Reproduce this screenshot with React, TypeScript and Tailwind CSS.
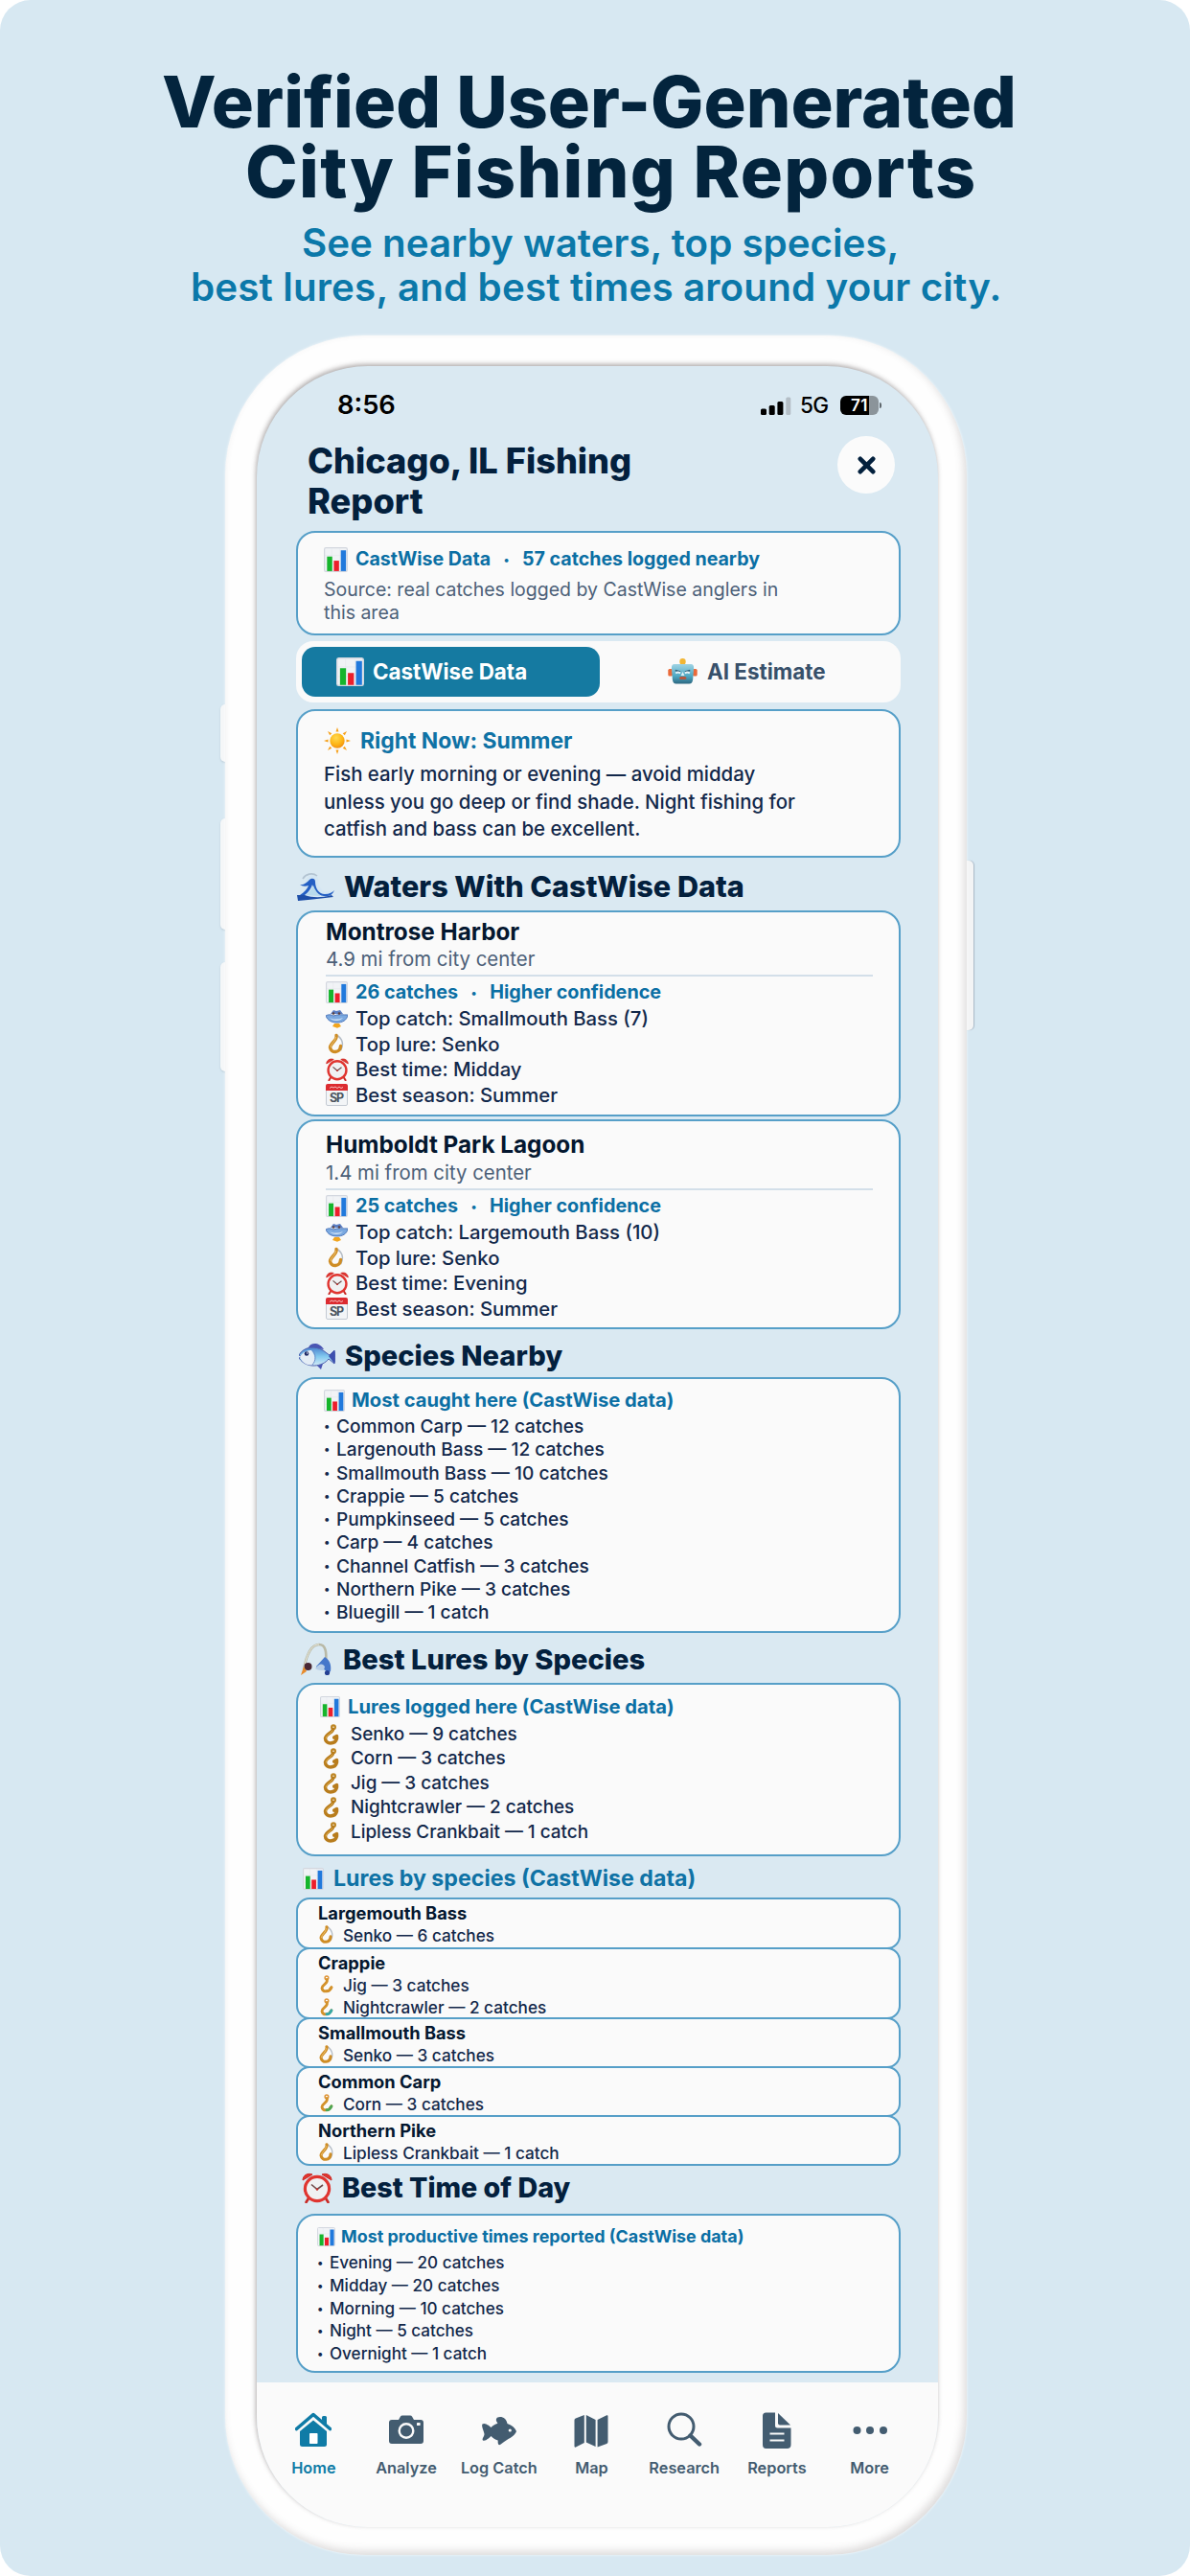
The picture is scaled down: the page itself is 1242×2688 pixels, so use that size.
import type { ReactNode } from "react";

type IconProps = { className?: string };

const ChartIcon = ({ className }: IconProps) => (
  <svg viewBox="0 0 24 24" preserveAspectRatio="none" className={className}>
    <rect x="0.6" y="0.6" width="22.8" height="22.8" rx="1.4" fill="#f1f3f6" stroke="#d3d7df" strokeWidth="1.2" />
    <path d="M1 8h22M1 16h22M8 1v22M16 1v22" stroke="#e3e6ec" strokeWidth="0.5" />
    <rect x="3.2" y="9" width="5.2" height="14" fill="#16b52c" />
    <rect x="10" y="13" width="5.2" height="10" fill="#ec1f2b" />
    <rect x="17" y="3" width="5.2" height="20" fill="#2179dc" />
  </svg>
);

const SunIcon = ({ className }: IconProps) => (
  <svg viewBox="0 0 28 28" className={className}>
    <defs>
      <radialGradient id="sun" cx="0.42" cy="0.3" r="0.75">
        <stop offset="0" stopColor="#ffd94f" />
        <stop offset="0.6" stopColor="#fdb515" />
        <stop offset="1" stopColor="#f08a12" />
      </radialGradient>
    </defs>
    <path
      d="M14 0l1.5 4.5h-3zM14 28l1.5-4.5h-3zM0 14l4.5-1.5v3zM28 14l-4.5-1.5v3zM4 4l4.3 2.2-2.1 2.1zM24 4l-4.3 2.2 2.1 2.1zM4 24l4.3-2.2-2.1-2.1zM24 24l-4.3-2.2 2.1-2.1z"
      fill="#f6a019"
    />
    <circle cx="14" cy="14" r="7.7" fill="url(#sun)" />
  </svg>
);

const RobotIcon = ({ className }: IconProps) => (
  <svg viewBox="0 0 32 27" preserveAspectRatio="none" className={className}>
    <defs>
      <linearGradient id="robot" x1="0" y1="0" x2="0" y2="1">
        <stop offset="0" stopColor="#9fd4e4" />
        <stop offset="0.6" stopColor="#4fa9c4" />
        <stop offset="1" stopColor="#2c6780" />
      </linearGradient>
    </defs>
    <circle cx="16" cy="3.4" r="3.3" fill="#f2b635" />
    <rect x="0.3" y="11" width="5" height="7.5" rx="1.6" fill="#ea6a3a" />
    <rect x="26.7" y="11" width="5" height="7.5" rx="1.6" fill="#ea6a3a" />
    <path d="M7 6h18q3 0 3 4l-1 12q-.5 4.5-4 4.5H9q-3.5 0-4-4.5L4 10q0-4 3-4z" fill="url(#robot)" />
    <path d="M8 12.5l5.5 1.5M24 12.5l-5.5 1.5" stroke="#2d5d78" strokeWidth="1.5" />
    <path d="M8.5 15.500q2.500-2 5 0M18.500 15.500q2.500-2 5 0" fill="none" stroke="#e8f5fa" strokeWidth="1.800" />
    <path d="M16 14l2 4h-4z" fill="#dff0f5" />
    <rect x="12.5" y="19" width="7.5" height="3" rx="1.5" fill="#b5573f" />
  </svg>
);

const WaveIcon = ({ className }: IconProps) => (
  <svg viewBox="0 0 40 29" className={className}>
    <path d="M9 9C10 4 14 1 19 3c3 1 4 4 3 7 2 7 6 12 15 8l-5 7-24 1z" fill="#d4e6f3" />
    <path d="M6 6c3-5 10-7 15-3" fill="none" stroke="#b3c4d2" strokeWidth="1.6" />
    <path
      d="M3 12c4 1 7-2 10-5 2-2 6-2 6 2 0 7 4 13 10 13 5 0 8-2 10-4-2 5-6 7-11 6-7-1-10-6-12-12-2 6-6 11-15 15l2-4c5-3 8-7 9-10-3 1-7 1-9-1z"
      fill="#245fc4"
    />
    <path d="M0 23h8c8 3 18 3 28 0l2 2c-12 1-22 3-37 4z" fill="#1e4fa8" />
    <path d="M9 23c4-3 6-6 8-10 2 5 4 8 8 11z" fill="#b9dbed" />
  </svg>
);

const FishIcon = ({ className }: IconProps) => (
  <svg viewBox="0 0 38 28" className={className}>
    <defs>
      <linearGradient id="fish" x1="0" y1="0" x2="0" y2="1">
        <stop offset="0" stopColor="#4b83cf" />
        <stop offset="0.5" stopColor="#82c9ef" />
        <stop offset="1" stopColor="#d3eaf6" />
      </linearGradient>
    </defs>
    <path d="M10 5C12 0 21-1 26 7z" fill="#4a56b4" />
    <path d="M18 23l5 5 2-6z" fill="#4a56b4" />
    <path
      d="M0 13C5 4 17 3 25 8c3 2 5 4 7 5l5-5c1 5 1 10 0 14l-6-5C25 25 8 28 0 16l3-1z"
      fill="url(#fish)"
      stroke="#4a5dad"
      strokeWidth="1"
    />
    <path d="M31 14l6-6c1 5 1 10 0 14z" fill="#3c4fae" />
    <path d="M1 15c3 7 8 9 13 8 4-4 3-10-1-15C8 8 4 10 1 15z" fill="#e4edf6" />
    <path d="M14 8c4 4 4 11 0 15" fill="none" stroke="#6c8cc8" strokeWidth="1" />
    <circle cx="8" cy="11.5" r="2.3" fill="#1d2a66" />
    <circle cx="8.7" cy="11" r="0.7" fill="#fff" />
  </svg>
);

const RodIcon = ({ className }: IconProps) => (
  <svg viewBox="0 0 32 35" className={className}>
    <path d="M3 28C6 12 11 2 19 2c7 0 8 8 7 19" fill="none" stroke="#b9b9a6" strokeWidth="2.6" />
    <path d="M3 28C6 12 11 2 19 2" fill="none" stroke="#ececdf" strokeWidth="1" />
    <path d="M16 25l9-10c5 3 7 8 6 15l-3 2c-2-4-5-5-12-5z" fill="#4677ca" />
    <path d="M15 27c4-5 7-6 10-2l-1 4c-3 0-6 0-9-2z" fill="#b9cfe8" />
    <circle cx="27.5" cy="31.5" r="2.6" fill="#243f92" />
    <circle cx="7.500" cy="25" r="4" fill="#4a2734" />
    <path d="M0 34l3-9 3 5z" fill="#e78b2c" />
  </svg>
);

// small perch shown in front of the top catch
const CatchIcon = ({ className }: IconProps) => (
  <svg viewBox="0 0 23 20" className={className}>
    <path d="M5 5l3-4 3 1 4-1 3 4z" fill="#5b7fc4" />
    <path
      d="M0 7c3-2 6-1 8 0 5-2 10-1 15-1-1 6-6 8-11 8C6 14 2 12 0 7z"
      fill="#7ba9e0"
      stroke="#456fb5"
      strokeWidth="0.9"
    />
    <path d="M4 9c4 2 9 2 14 0-3 4-11 4-14 0z" fill="#cfe2f5" />
    <circle cx="8" cy="4.5" r="1.3" fill="#5a4140" />
    <circle cx="14" cy="4.5" r="1.3" fill="#5a4140" />
    <path d="M7 18l2-3h5l2 3-4 1.8z" fill="#f2a51e" />
  </svg>
);

const HookIcon = ({ className }: IconProps) => (
  <svg viewBox="0 0 17 22" className={className}>
    <circle cx="11" cy="3.2" r="1.9" fill="none" stroke="#bd8523" strokeWidth="2.2" />
    <path
      d="M10.500 5.500c0 3.500-7.500 4.500-8 9.500 0 6.500 10.500 6.500 12 0V12.500l-2.800 1.600"
      fill="none"
      stroke="#b87c1c"
      strokeWidth="3.5"
      strokeLinecap="round"
      strokeLinejoin="round"
    />
    <path d="M10 7c-1 3-6.500 4-7 8" fill="none" stroke="#e0b04e" strokeWidth="1" strokeLinecap="round" />
  </svg>
);

const BaitHookIcon = ({ className }: IconProps) => (
  <svg viewBox="0 0 17 22" className={className}>
    <path d="M9.500 1.500c6 4 7.500 10 4 16" fill="#fafafa" stroke="#b4bcc6" strokeWidth="1.6" />
    <path
      d="M9 2c1.500 5-6.500 8-6.500 12.500 1 6.500 10.500 6 11-1.500"
      fill="none"
      stroke="#cf8d25"
      strokeWidth="3.4"
      strokeLinecap="round"
    />
    <path d="M8.500 4c0 4-5.500 6.500-5.500 10" fill="none" stroke="#ecc374" strokeWidth="1" strokeLinecap="round" />
  </svg>
);

const JigHookIcon = ({ className, tail = "#d3922b" }: IconProps & { tail?: string }) => (
  <svg viewBox="0 0 17 22" className={className}>
    <circle cx="9" cy="3" r="2" fill="none" stroke="#e0963a" strokeWidth="1.7" />
    <path d="M9 5c3 4-5 5-5.500 10 1 5 8 5 11-1" fill="none" stroke="#d3922b" strokeWidth="3" strokeLinecap="round" />
    <path d="M9 18.500c2.500 0 4.500-2 5.500-4.500" fill="none" stroke={tail} strokeWidth="3.2" strokeLinecap="round" />
  </svg>
);

const ClockIcon = ({ className }: IconProps) => (
  <svg viewBox="0 0 32 32" className={className}>
    <path d="M1 8c0-5 5-8 10-6zM31 8c0-5-5-8-10-6z" fill="#e3352f" stroke="#c92a25" />
    <path d="M7 27l-2.5 4M25 27l2.5 4" stroke="#c92a25" strokeWidth="2.6" strokeLinecap="round" />
    <circle cx="16" cy="17" r="12.6" fill="#f0f1f2" stroke="#e03530" strokeWidth="3.2" />
    <path d="M10 12.5l6 5 6-4.5" fill="none" stroke="#6d4a4a" strokeWidth="1.6" />
    <circle cx="16" cy="17.5" r="1.2" fill="#c92a25" />
  </svg>
);

const CalendarIcon = ({ className }: IconProps) => (
  <svg viewBox="0 0 23 23" className={className}>
    <rect x="0.5" y="1" width="22" height="21.5" rx="1.5" fill="#f3f5f7" stroke="#c3cad2" />
    <path d="M0 7V2q0-2 2-2h19q2 0 2 2v5z" fill="#dc2b30" />
    <path d="M4 4.500l2-1.500 2 1 2-1 2 1.500 2-1.500 2 1.500 2-1" fill="none" stroke="#f6c2c2" strokeWidth="1" />
    <text x="4" y="19" fontSize="12.500" fontWeight="700" fontFamily="Inter, sans-serif" fill="#4d5560" textLength="15">
      SP
    </text>
  </svg>
);

const HomeIcon = ({ className }: IconProps) => (
  <svg viewBox="0 0 38 38" className={className}>
    <path
      d="M1.500 17.500L19 2.500l17.500 15"
      fill="none"
      stroke="currentColor"
      strokeWidth="3.6"
      strokeLinecap="round"
      strokeLinejoin="round"
    />
    <path d="M28 5.500q0-1.500 1.500-1.500h2q1.500 0 1.500 1.500V13l-5-4.500z" fill="currentColor" />
    <path d="M19 8.500L33 20v13.500q0 2.500-2.500 2.500h-23Q5 36 5 33.500V20z" fill="currentColor" />
    <rect x="15" y="22" width="8.5" height="11" rx="0.8" fill="#fff" />
  </svg>
);

const CameraIcon = ({ className }: IconProps) => (
  <svg viewBox="0 0 38 38" className={className}>
    <path
      d="M4 8h7l2-3.500Q13.500 3.500 15 3.500h8q1.500 0 2 1L27 8h7q3 0 3 3v19q0 3-3 3H4q-3 0-3-3V11q0-3 3-3z"
      fill="currentColor"
    />
    <circle cx="19" cy="19.5" r="7.3" fill="none" stroke="#fafafa" strokeWidth="2.4" />
    <rect x="30" y="11" width="3.6" height="3" rx="0.6" fill="#fafafa" />
  </svg>
);

const LogCatchIcon = ({ className }: IconProps) => (
  <svg viewBox="0 0 38 38" className={className}>
    <path
      d="M1.500 12.500c2-1.500 5 0 9 3.500 2-2 4-3.200 7-4.200-1.500-2-2.500-4-.7-6C21 3.500 26.500 6 27.500 12c5 1.500 8 4.500 9.500 8-1.500 3.500-4.500 6-8.500 8-3 2-6 4-8.500 6-2 .7-2.500-1.500-2.300-4.500-3-1-5.200-2.500-7.200-4.500-4 4-7 5.500-8.500 4.500-1.500-1.500 1.500-4 1.500-6.500S0 14.500 1.500 12.500z"
      fill="currentColor"
    />
    <circle cx="30.3" cy="19" r="1.6" fill="#fafafa" />
  </svg>
);

const MapIcon = ({ className }: IconProps) => (
  <svg viewBox="0 0 38 38" className={className}>
    <path
      d="M1.500 8.500q0-1.500 1.300-2L11.800 3v29L3 36.500q-1.500.6-1.500-1zM13.800 3l9.800 5v28l-9.800-4.500zM25.600 8l9.600-4.700q1.300-.5 1.300 1V31q0 1.300-1.300 2l-9.600 3.500z"
      fill="currentColor"
    />
  </svg>
);

const ResearchIcon = ({ className }: IconProps) => (
  <svg viewBox="0 0 38 38" className={className}>
    <circle cx="16" cy="15" r="13" fill="none" stroke="currentColor" strokeWidth="3" />
    <path d="M25.500 24.500l9.500 9" stroke="currentColor" strokeWidth="4.4" strokeLinecap="round" />
  </svg>
);

const ReportsIcon = ({ className }: IconProps) => (
  <svg viewBox="0 0 38 38" className={className}>
    <path
      d="M7.500 0.500H17V14q0 2.500 2.500 2.500h14V34q0 4-4 4h-22q-3.500 0-3.500-4V4q0-3.500 3.500-3.500z"
      fill="currentColor"
    />
    <path d="M20 1v10.500q0 2 2 2h11z" fill="currentColor" />
    <path d="M11.500 22.500h15M11.500 29.500h15" stroke="#fafafa" strokeWidth="2" />
  </svg>
);

const MoreIcon = ({ className }: IconProps) => (
  <svg viewBox="0 0 38 38" className={className}>
    <circle cx="5.5" cy="19" r="4" fill="currentColor" />
    <circle cx="19" cy="19" r="4" fill="currentColor" />
    <circle cx="33" cy="19" r="4" fill="currentColor" />
  </svg>
);

const waters = [
  {
    name: "Montrose Harbor",
    distance: "4.9 mi from city center",
    catches: "26 catches",
    topCatch: "Smallmouth Bass (7)",
    lure: "Senko",
    time: "Midday",
    card: "h-[215px] pt-[6px]",
    gap: "mt-[2px]",
  },
  {
    name: "Humboldt Park Lagoon",
    distance: "1.4 mi from city center",
    catches: "25 catches",
    topCatch: "Largemouth Bass (10)",
    lure: "Senko",
    time: "Evening",
    card: "mt-[3px] h-[219px] pt-[10px]",
    gap: "mt-[3px]",
  },
];

const species = [
  "Common Carp — 12 catches",
  "Largenouth Bass — 12 catches",
  "Smallmouth Bass — 10 catches",
  "Crappie — 5 catches",
  "Pumpkinseed — 5 catches",
  "Carp — 4 catches",
  "Channel Catfish — 3 catches",
  "Northern Pike — 3 catches",
  "Bluegill — 1 catch",
];

const lures = [
  "Senko — 9 catches",
  "Corn — 3 catches",
  "Jig — 3 catches",
  "Nightcrawler — 2 catches",
  "Lipless Crankbait — 1 catch",
];

const hookClass = "h-[20px] w-[17px]";

const luresBySpecies = [
  {
    name: "Largemouth Bass",
    height: "h-[54px]",
    items: [{ text: "Senko — 6 catches", icon: <BaitHookIcon className={hookClass} /> }],
  },
  {
    name: "Crappie",
    height: "-mt-[2px] h-[75px]",
    items: [
      { text: "Jig — 3 catches", icon: <JigHookIcon className={hookClass} /> },
      { text: "Nightcrawler — 2 catches", icon: <JigHookIcon className={hookClass} tail="#35a7a5" /> },
    ],
  },
  {
    name: "Smallmouth Bass",
    height: "-mt-[2px] h-[53px]",
    items: [{ text: "Senko — 3 catches", icon: <BaitHookIcon className={hookClass} /> }],
  },
  {
    name: "Common Carp",
    height: "-mt-[2px] h-[53px]",
    items: [{ text: "Corn — 3 catches", icon: <JigHookIcon className={hookClass} tail="#4ba653" /> }],
  },
  {
    name: "Northern Pike",
    height: "-mt-[2px] h-[53px]",
    items: [{ text: "Lipless Crankbait — 1 catch", icon: <BaitHookIcon className={hookClass} /> }],
  },
];

const times = [
  "Evening — 20 catches",
  "Midday — 20 catches",
  "Morning — 10 catches",
  "Night — 5 catches",
  "Overnight — 1 catch",
];

const tabs = [
  { label: "Home", icon: HomeIcon, active: true },
  { label: "Analyze", icon: CameraIcon },
  { label: "Log Catch", icon: LogCatchIcon },
  { label: "Map", icon: MapIcon },
  { label: "Research", icon: ResearchIcon },
  { label: "Reports", icon: ReportsIcon },
  { label: "More", icon: MoreIcon },
];

function Card({ className, children }: { className: string; children: ReactNode }) {
  return (
    <section className={`rounded-[20px] border-2 border-[#569fc8] bg-[#fafafa] ${className}`}>
      {children}
    </section>
  );
}

function Dot() {
  return <span className="w-[33px] text-center text-[12px]">•</span>;
}

function StatRow({ icon, children }: { icon: ReactNode; children: ReactNode }) {
  return (
    <li className="flex h-[26.5px] items-center text-[20.3px] font-medium">
      <span className="flex w-[31px] shrink-0">{icon}</span>
      {children}
    </li>
  );
}

function BulletList({ items, className }: { items: string[]; className: string }) {
  return (
    <ul className={`font-medium ${className}`}>
      {items.map((item) => (
        <li key={item} className="flex">
          <span className="w-[13px] text-[12px]">•</span>
          {item}
        </li>
      ))}
    </ul>
  );
}

function StatusBar() {
  return (
    <div className="flex h-[40px] items-center pr-[59px] pl-[84px] text-black">
      <span className="text-[27.3px] font-semibold">8:56</span>
      <svg viewBox="0 0 32 19" className="ml-auto h-[19px] w-[32px]">
        <rect x="0" y="12.5" width="6" height="6.5" rx="1.5" />
        <rect x="8.7" y="9" width="6" height="10" rx="1.5" />
        <rect x="17.4" y="5" width="6" height="14" rx="1.5" />
        <rect x="26.3" y="0.5" width="5" height="18.5" rx="1.5" fill="#b4bec6" />
      </svg>
      <span className="ml-[9px] w-[32px] text-[22.5px] leading-none font-medium tracking-tight">5G</span>
      <div className="ml-[10px] flex items-center gap-px">
        <div className="flex h-[20px] w-[40px] items-center rounded-[6px] bg-linear-to-r from-black from-75% to-[#8b949a] to-75% pl-[11px]">
          <span className="text-[17px] leading-none font-semibold tracking-[0.5px] text-white">71</span>
        </div>
        <div className="h-[6px] w-[2px] rounded-r-full bg-[#5d666c]" />
      </div>
    </div>
  );
}

export default function App() {
  return (
    <div className="h-[2688px] w-[1242px] overflow-hidden bg-white font-[Inter,sans-serif]">
      <main className="h-full rounded-[32px] bg-[#d7e8f2] pt-[70px]">
        <h1 className="text-[73.6px] leading-[73px] font-extrabold whitespace-nowrap text-[#03243d]">
          <span className="ml-[169px] block">Verified User-Generated</span>
          <span className="ml-[256px] block tracking-[1.3px]">City Fishing Reports</span>
        </h1>
        <p className="mt-[15px] text-[40.3px] leading-[46px] font-semibold whitespace-nowrap text-[#0b78a9]">
          <span className="ml-[315px] block">See nearby waters, top species,</span>
          <span className="ml-[199px] block tracking-[0.16px]">best lures, and best times around your city.</span>
        </p>

        <div className="relative mt-[27px] ml-[235px] h-[2316px] w-[774px]">
          {/* side buttons */}
          <div className="absolute top-[385px] -left-[5px] h-[60px] w-[10px] rounded-l-[5px] bg-[#f5f7f8] shadow-[0_1px_2px_rgba(70,90,110,0.2)]" />
          <div className="absolute top-[504px] -left-[5px] h-[116px] w-[10px] rounded-l-[5px] bg-[#f5f7f8] shadow-[0_1px_2px_rgba(70,90,110,0.2)]" />
          <div className="absolute top-[654px] -left-[5px] h-[114px] w-[10px] rounded-l-[5px] bg-[#f5f7f8] shadow-[0_1px_2px_rgba(70,90,110,0.2)]" />
          <div className="absolute top-[548px] -right-[7px] h-[177px] w-[12px] rounded-r-[5px] bg-[#f3f4f5] shadow-[1px_0_1px_rgba(110,125,145,0.45)]" />

          <div className="relative h-full rounded-[146px] bg-[#fefefe] pt-[32px] pr-[30px] pb-[29px] pl-[33px] shadow-[inset_-3px_-4px_8px_rgba(90,80,80,0.2),0_0_3px_rgba(255,255,255,0.8)]">
            <div className="flex h-[2255px] flex-col overflow-hidden rounded-[116px] bg-[#dae9f2] pt-[21px] text-[#12284a] shadow-[-1px_-2px_5px_rgba(80,70,70,0.45)]">
              <StatusBar />

              <header className="mt-[12px] flex h-[99px] items-start justify-between pr-[45px] pl-[53px]">
                <h2 className="w-[380px] pt-[5px] text-[36.2px] leading-[42px] font-extrabold text-[#03203d]">
                  Chicago, IL Fishing Report
                </h2>
                <button className="flex size-[60px] items-center justify-center rounded-full bg-[#fbfbfb]">
                  <svg viewBox="0 0 20 20" className="size-[19px]">
                    <path d="M3 3l14 14M17 3L3 17" stroke="#03203d" strokeWidth="5" strokeLinecap="round" />
                  </svg>
                </button>
              </header>

              <div className="flex-1 pr-[39px] pl-[41px]">
                <Card className="h-[109px] pt-[15px] pl-[27px]">
                  <div className="flex h-[26px] items-center text-[19.6px] font-bold text-[#0b6fa4]">
                    <ChartIcon className="h-[26px] w-[25px]" />
                    <span className="ml-[8px]">CastWise Data</span>
                    <Dot />
                    <span>57 catches logged nearby</span>
                  </div>
                  <p className="mt-[6px] w-[490px] text-[19.5px] leading-[24.3px] text-[#4c6078]">
                    Source: real catches logged by CastWise anglers in this area
                  </p>
                </Card>

                <div className="mt-[6px] flex h-[64px] items-center rounded-[18px] bg-[#fafafa] p-[6px] text-[22.4px] font-bold">
                  <div className="flex h-[52px] w-[311px] items-center rounded-[14px] bg-[#157aa1] pl-[36px] text-white">
                    <ChartIcon className="h-[30px] w-[29px]" />
                    <span className="ml-[9px]">CastWise Data</span>
                  </div>
                  <div className="flex items-center pl-[71px] text-[#37506a]">
                    <RobotIcon className="h-[27px] w-[31px]" />
                    <span className="ml-[10px]">AI Estimate</span>
                  </div>
                </div>

                <Card className="mt-[7px] h-[155px] pt-[17px] pl-[27px]">
                  <div className="flex h-[28px] items-center text-[22.9px] font-bold text-[#0f72a5]">
                    <SunIcon className="size-[28px]" />
                    <span className="ml-[10px]">Right Now: Summer</span>
                  </div>
                  <p className="mt-[7px] w-[510px] text-[20.4px] leading-[28.5px] font-medium">
                    Fish early morning or evening — avoid midday unless you go deep or find shade. Night fishing for
                    catfish and bass can be excellent.
                  </p>
                </Card>

                <h3 className="flex h-[55px] items-center pt-[5px] pl-px text-[30.6px] font-extrabold text-[#03203d]">
                  <WaveIcon className="h-[29px] w-[40px]" />
                  <span className="ml-[9px]">Waters With CastWise Data</span>
                </h3>
                {waters.map((water) => (
                  <Card key={water.name} className={`pr-[27px] pl-[29px] ${water.card}`}>
                    <h4 className="text-[24.3px] leading-[28px] font-bold text-[#04172f]">{water.name}</h4>
                    <p className={`text-[20.4px] leading-[26px] text-[#4c6078] ${water.gap}`}>{water.distance}</p>
                    <div className="mt-[3px] h-[2px] bg-[#d3dfe9]" />
                    <div className="mt-[2px] flex h-[29px] items-center text-[19.8px] font-bold text-[#0b6fa4]">
                      <ChartIcon className="size-[23px]" />
                      <span className="ml-[8px]">{water.catches}</span>
                      <Dot />
                      <span>Higher confidence</span>
                    </div>
                    <ul>
                      <StatRow icon={<CatchIcon className="h-[20px] w-[23px]" />}>Top catch: {water.topCatch}</StatRow>
                      <StatRow icon={<BaitHookIcon className="ml-[2px] h-[23px] w-[17px]" />}>Top lure: {water.lure}</StatRow>
                      <StatRow icon={<ClockIcon className="size-[24px]" />}>Best time: {water.time}</StatRow>
                      <StatRow icon={<CalendarIcon className="size-[23px]" />}>Best season: Summer</StatRow>
                    </ul>
                  </Card>
                ))}

                <h3 className="flex h-[50px] items-center pt-[5px] pl-[3px] text-[29.1px] font-extrabold text-[#03203d]">
                  <FishIcon className="h-[28px] w-[38px]" />
                  <span className="ml-[10px]">Species Nearby</span>
                </h3>
                <Card className="h-[267px] pt-[10px] pl-[27px]">
                  <div className="flex h-[24px] items-center text-[20.2px] font-bold text-[#0b6fa4]">
                    <ChartIcon className="h-[23px] w-[22px]" />
                    <span className="ml-[7px]">Most caught here (CastWise data)</span>
                  </div>
                  <BulletList items={species} className="mt-[3px] text-[19.1px] leading-[24.25px]" />
                </Card>

                <h3 className="flex h-[52px] items-center pt-[3px] pl-[5px] text-[29.1px] font-extrabold text-[#03203d]">
                  <RodIcon className="h-[35px] w-[32px]" />
                  <span className="ml-[12px]">Best Lures by Species</span>
                </h3>
                <Card className="h-[181px] pt-[11px] pl-[23px]">
                  <div className="flex h-[24px] items-center text-[20.2px] font-bold text-[#0b6fa4]">
                    <ChartIcon className="h-[22px] w-[21px]" />
                    <span className="ml-[8px]">Lures logged here (CastWise data)</span>
                  </div>
                  <ul className="mt-[4px] text-[18.9px] leading-[25.45px] font-medium">
                    {lures.map((item) => (
                      <li key={item} className="flex items-center">
                        <HookIcon className="ml-[3px] h-[22px] w-[17px]" />
                        <span className="ml-[12px]">{item}</span>
                      </li>
                    ))}
                  </ul>
                </Card>

                <h4 className="flex h-[43px] items-center pt-[3px] pl-[7px] text-[23.2px] font-bold text-[#0f72a5]">
                  <ChartIcon className="h-[23px] w-[22px]" />
                  <span className="ml-[10px]">Lures by species (CastWise data)</span>
                </h4>
                {luresBySpecies.map((group) => (
                  <div
                    key={group.name}
                    className={`rounded-[14px] border-2 border-[#569fc8] bg-[#fafafa] pt-[2.5px] pl-[21px] text-[17.2px] leading-[23.2px] font-medium ${group.height}`}
                  >
                    <h5 className="text-[18.3px] font-bold text-[#04172f]">{group.name}</h5>
                    {group.items.map((item) => (
                      <div key={item.text} className="flex items-center">
                        {item.icon}
                        <span className="ml-[9px]">{item.text}</span>
                      </div>
                    ))}
                  </div>
                ))}

                <h3 className="flex h-[50px] items-center pb-[4px] pl-[6px] text-[28.7px] font-extrabold text-[#03203d]">
                  <ClockIcon className="size-[32px]" />
                  <span className="ml-[10px]">Best Time of Day</span>
                </h3>
                <Card className="h-[166px] pt-[11px] pl-[20px]">
                  <div className="flex h-[22px] items-center text-[17.9px] font-bold text-[#0b6fa4]">
                    <ChartIcon className="h-[20px] w-[19px]" />
                    <span className="ml-[6px]">Most productive times reported (CastWise data)</span>
                  </div>
                  <BulletList items={times} className="mt-[4px] text-[17.1px] leading-[23.75px]" />
                </Card>
              </div>

              <nav className="grid h-[151px] grid-cols-7 content-start bg-[#fafafa] pt-[31px] pr-[23px] pl-[11px]">
                {tabs.map(({ label, icon: Icon, active }) => (
                  <div key={label} className={`flex flex-col items-center ${active ? "text-[#0f7ba6]" : "text-[#435c70]"}`}>
                    <Icon className="size-[38px]" />
                    <span className="mt-[10px] text-[16.3px] leading-[20px] font-semibold whitespace-nowrap">{label}</span>
                  </div>
                ))}
              </nav>
            </div>
          </div>
        </div>
      </main>
    </div>
  );
}
